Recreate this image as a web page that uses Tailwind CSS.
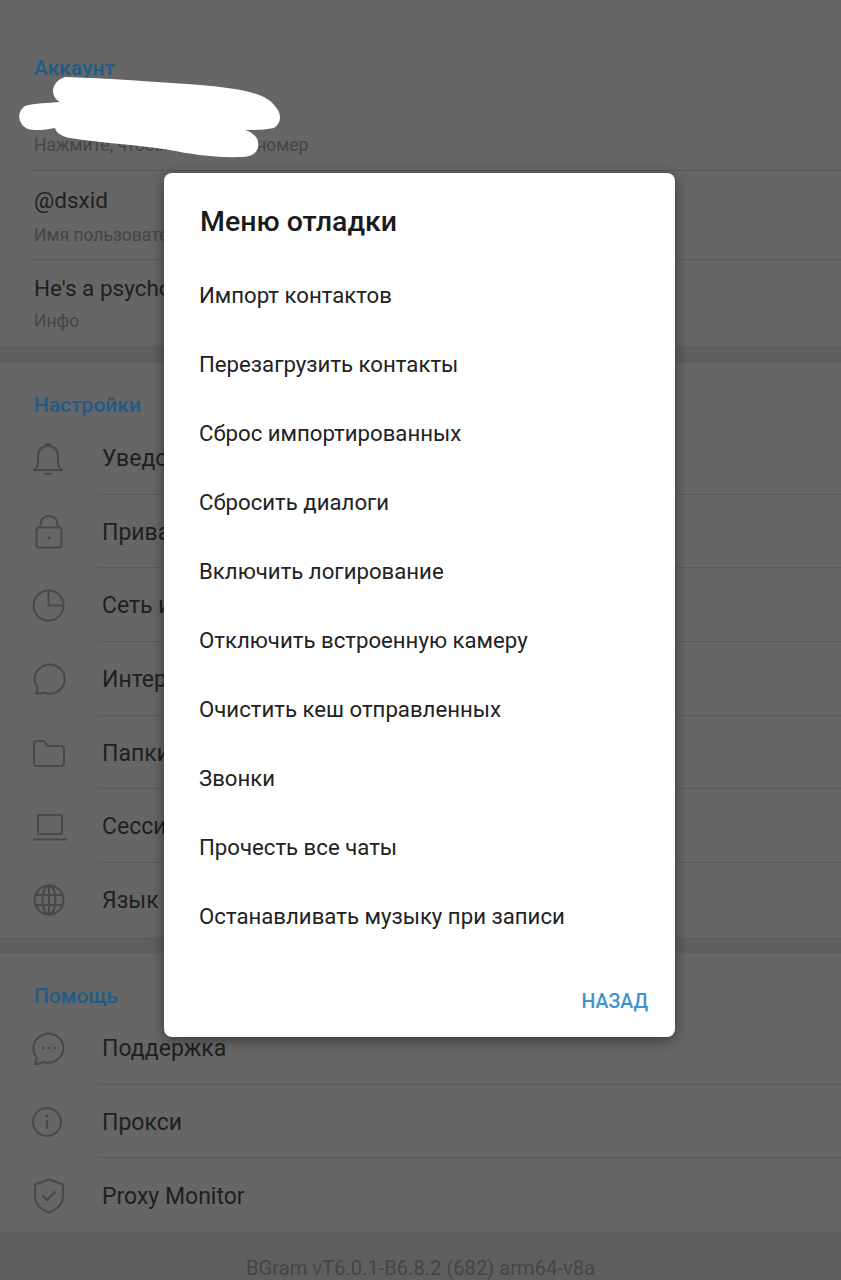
<!DOCTYPE html>
<html lang="ru">
<head>
<meta charset="utf-8">
<title>Меню отладки</title>
<script src="https://cdn.jsdelivr.net/npm/@tailwindcss/browser@4"></script>
</head>
<body class="m-0">
<div class="relative w-[841px] h-[1280px] overflow-hidden bg-[#5f5f5f] font-['Roboto',sans-serif] text-[23px] leading-[30px] text-[#1f1f1f]">

  <section class="h-[346px] bg-[#666666]">
    <h2 class="h-[82px] pt-[53px] pl-[34px] text-[21px] font-medium text-[#205c88]">Аккаунт</h2>
    <div class="h-[89px] ml-[30px] pl-[4px] pt-[16px] border-b border-[#5b5b5b]">
      <p class="h-[30px]"></p>
      <p class="mt-[2px] text-[17.5px] text-[#454545]">Нажмите, чтобы изменить номер</p>
    </div>
    <div class="h-[89px] ml-[30px] pl-[4px] pt-[14px] border-b border-[#5b5b5b]">
      <p class="text-[22.5px]">@dsxid</p>
      <p class="mt-[5px] text-[17.5px] text-[#454545]">Имя пользователя</p>
    </div>
    <div class="h-[86px] ml-[30px] pl-[4px] pt-[13px]">
      <p class="text-[22.5px]">He's a psycho</p>
      <p class="mt-[3px] text-[17.5px] text-[#454545]">Инфо</p>
    </div>
  </section>

  <section class="mt-[17px] h-[574px] bg-[#666666]">
    <h2 class="h-[58px] pt-[27px] pl-[34px] text-[21px] font-medium text-[#205c88]">Настройки</h2>
    <div class="h-[73.7px] pl-[30px] flex items-center">
      <svg class="w-[36px] h-[36px] overflow-visible shrink-0" viewBox="0 0 36 36" fill="none" stroke="#484848" stroke-width="2" stroke-linejoin="round" stroke-linecap="round"><path d="M4 30c3-2 4-4 4-8v-6c0-6 4-10 10-10s10 4 10 10v6c0 4 1 6 4 8z"/><path d="M16 6c0-3 4-3 4 0M15 34h6"/></svg>
      <div class="ml-[32px] self-stretch flex-1 flex items-center border-b border-[#5b5b5b]"><span class="ml-[4px] pt-[3px]">Уведомления и звук</span></div>
    </div>
    <div class="h-[73.7px] pl-[30px] flex items-center">
      <svg class="w-[36px] h-[36px] overflow-visible shrink-0" viewBox="0 0 36 36" fill="none" stroke="#484848" stroke-width="2" stroke-linejoin="round" stroke-linecap="round"><rect x="6.500" y="13.500" width="25" height="20" rx="2.500"/><path d="M10.500 13v-3a8.500 8 0 0 1 17 0v3"/><circle cx="19" cy="24" r="1.500" fill="#484848" stroke="none"/></svg>
      <div class="ml-[32px] self-stretch flex-1 flex items-center border-b border-[#5b5b5b]"><span class="ml-[4px] pt-[3px]">Приватность</span></div>
    </div>
    <div class="h-[73.7px] pl-[30px] flex items-center">
      <svg class="w-[36px] h-[36px] overflow-visible shrink-0" viewBox="0 0 36 36" fill="none" stroke="#484848" stroke-width="2" stroke-linejoin="round" stroke-linecap="round"><circle cx="18.500" cy="18.500" r="15"/><path d="M18.500 4v14.500H33"/></svg>
      <div class="ml-[32px] self-stretch flex-1 flex items-center border-b border-[#5b5b5b]"><span class="ml-[4px] pt-[3px]">Сеть и кеш</span></div>
    </div>
    <div class="h-[73.7px] pl-[30px] flex items-center">
      <svg class="w-[36px] h-[36px] overflow-visible shrink-0" viewBox="0 0 36 36" fill="none" stroke="#484848" stroke-width="2" stroke-linejoin="round" stroke-linecap="round"><path d="M6 32.500c1-2 2-4 1.500-6A15 14.500 0 1 1 14 31.500C11 32 8 32.800 6 32.500z"/></svg>
      <div class="ml-[32px] self-stretch flex-1 flex items-center border-b border-[#5b5b5b]"><span class="ml-[4px] pt-[3px]">Интерфейс</span></div>
    </div>
    <div class="h-[73.7px] pl-[30px] flex items-center">
      <svg class="w-[36px] h-[36px] overflow-visible shrink-0" viewBox="0 0 36 36" fill="none" stroke="#484848" stroke-width="2" stroke-linejoin="round" stroke-linecap="round"><path d="M4 9a3 3 0 0 1 3-3h7l4 5h13a3 3 0 0 1 3 3v14a3 3 0 0 1-3 3H7a3 3 0 0 1-3-3z"/></svg>
      <div class="ml-[32px] self-stretch flex-1 flex items-center border-b border-[#5b5b5b]"><span class="ml-[4px] pt-[3px]">Папки</span></div>
    </div>
    <div class="h-[73.7px] pl-[30px] flex items-center">
      <svg class="w-[36px] h-[36px] overflow-visible shrink-0" viewBox="0 0 36 36" fill="none" stroke="#484848" stroke-width="2" stroke-linejoin="round" stroke-linecap="round"><rect x="8" y="7" width="24" height="19" rx="1.500"/><path d="M4 31.500h32"/></svg>
      <div class="ml-[32px] self-stretch flex-1 flex items-center border-b border-[#5b5b5b]"><span class="ml-[4px] pt-[3px]">Сессии</span></div>
    </div>
    <div class="h-[73.7px] pl-[30px] flex items-center">
      <svg class="w-[36px] h-[36px] overflow-visible shrink-0" viewBox="0 0 36 36" fill="none" stroke="#484848" stroke-width="2" stroke-linejoin="round" stroke-linecap="round"><circle cx="19" cy="18" r="14.500"/><ellipse cx="19" cy="18" rx="6.500" ry="14.500"/><path d="M19 3.500v29M6 13h26M6 23h26"/></svg>
      <div class="ml-[32px] self-stretch flex-1 flex items-center"><span class="ml-[4px] pt-[3px]">Язык</span></div>
    </div>
  </section>

  <section class="mt-[16px] h-[279px] bg-[#666666]">
    <h2 class="h-[58px] pt-[28px] pl-[34px] text-[21px] font-medium text-[#205c88]">Помощь</h2>
    <div class="h-[73.7px] pl-[30px] flex items-center">
      <svg class="w-[36px] h-[36px] overflow-visible shrink-0" viewBox="0 0 36 36" fill="none" stroke="#484848" stroke-width="2" stroke-linejoin="round" stroke-linecap="round"><path d="M5 34c1-2 2-4 1.500-7A15 14.500 0 1 1 14 32C11 33 8 34.300 5 34z"/><circle cx="13" cy="18" r="1.200" fill="#484848" stroke="none"/><circle cx="19" cy="18" r="1.200" fill="#484848" stroke="none"/><circle cx="25" cy="18" r="1.200" fill="#484848" stroke="none"/></svg>
      <div class="ml-[32px] self-stretch flex-1 flex items-center border-b border-[#5b5b5b]"><span class="ml-[4px] pt-[3px]">Поддержка</span></div>
    </div>
    <div class="h-[73.7px] pl-[30px] flex items-center">
      <svg class="w-[36px] h-[36px] overflow-visible shrink-0" viewBox="0 0 36 36" fill="none" stroke="#484848" stroke-width="2" stroke-linejoin="round" stroke-linecap="round"><circle cx="17" cy="18" r="14"/><path d="M17 17v7"/><circle cx="17" cy="12" r="1.400" fill="#484848" stroke="none"/></svg>
      <div class="ml-[32px] self-stretch flex-1 flex items-center border-b border-[#5b5b5b]"><span class="ml-[4px] pt-[3px]">Прокси</span></div>
    </div>
    <div class="h-[73.7px] pl-[30px] flex items-center">
      <svg class="w-[36px] h-[36px] overflow-visible shrink-0" viewBox="0 0 36 36" fill="none" stroke="#484848" stroke-width="2" stroke-linejoin="round" stroke-linecap="round"><path d="M19 2.500l14 5v11c0 8-6 14-14 17-8-3-14-9-14-17v-11z"/><path d="M13 19l4 4 8-8"/></svg>
      <div class="ml-[32px] self-stretch flex-1 flex items-center"><span class="ml-[4px] pt-[3px]">Proxy Monitor</span></div>
    </div>
  </section>

  <p class="mt-[21px] text-center text-[20.15px] leading-[30px] text-[#454545]">BGram vT6.0.1-B6.8.2 (682) arm64-v8a</p>

  <svg class="absolute left-0 top-0 w-[300px] h-[170px]" viewBox="0 0 300 170"><path fill="#ffffff" d="M65 77C100 78 130 80 200 85C235 88 264 92 274 105C281 112 283 122 274 128C265 130 255 130 245 130C255 133 260 140 258 148C255 155 250 157 240 157C215 158 190 154 170 150C140 145 100 143 70 138C60 136 56 132 55 128C45 130 35 131 28 129C18 125 16 112 25 106C35 103 48 103 60 102C50 97 50 82 65 77Z"/></svg>

  <div class="absolute left-[164px] top-[173px] w-[511px] h-[864px] rounded-[8px] bg-white shadow-[0_3px_14px_rgba(0,0,0,0.45)]">
    <h1 class="pl-[36px] pt-[33px] h-[88px] text-[28.5px] leading-[32px] font-medium text-[#1a1a1a]">Меню отладки</h1>
    <ul class="pl-[35px] text-[22.2px] text-[#222222]">
      <li class="h-[69px] leading-[69px]">Импорт контактов</li>
      <li class="h-[69px] leading-[69px]">Перезагрузить контакты</li>
      <li class="h-[69px] leading-[69px]">Сброс импортированных</li>
      <li class="h-[69px] leading-[69px]">Сбросить диалоги</li>
      <li class="h-[69px] leading-[69px]">Включить логирование</li>
      <li class="h-[69px] leading-[69px]">Отключить встроенную камеру</li>
      <li class="h-[69px] leading-[69px]">Очистить кеш отправленных</li>
      <li class="h-[69px] leading-[69px]">Звонки</li>
      <li class="h-[69px] leading-[69px]">Прочесть все чаты</li>
      <li class="h-[69px] leading-[69px]">Останавливать музыку при записи</li>
    </ul>
    <div class="mt-[36px] pr-[27px] text-right text-[19.5px] leading-[30px] font-medium text-[#3f94d0]">НАЗАД</div>
  </div>
</div>
</body>
</html>
